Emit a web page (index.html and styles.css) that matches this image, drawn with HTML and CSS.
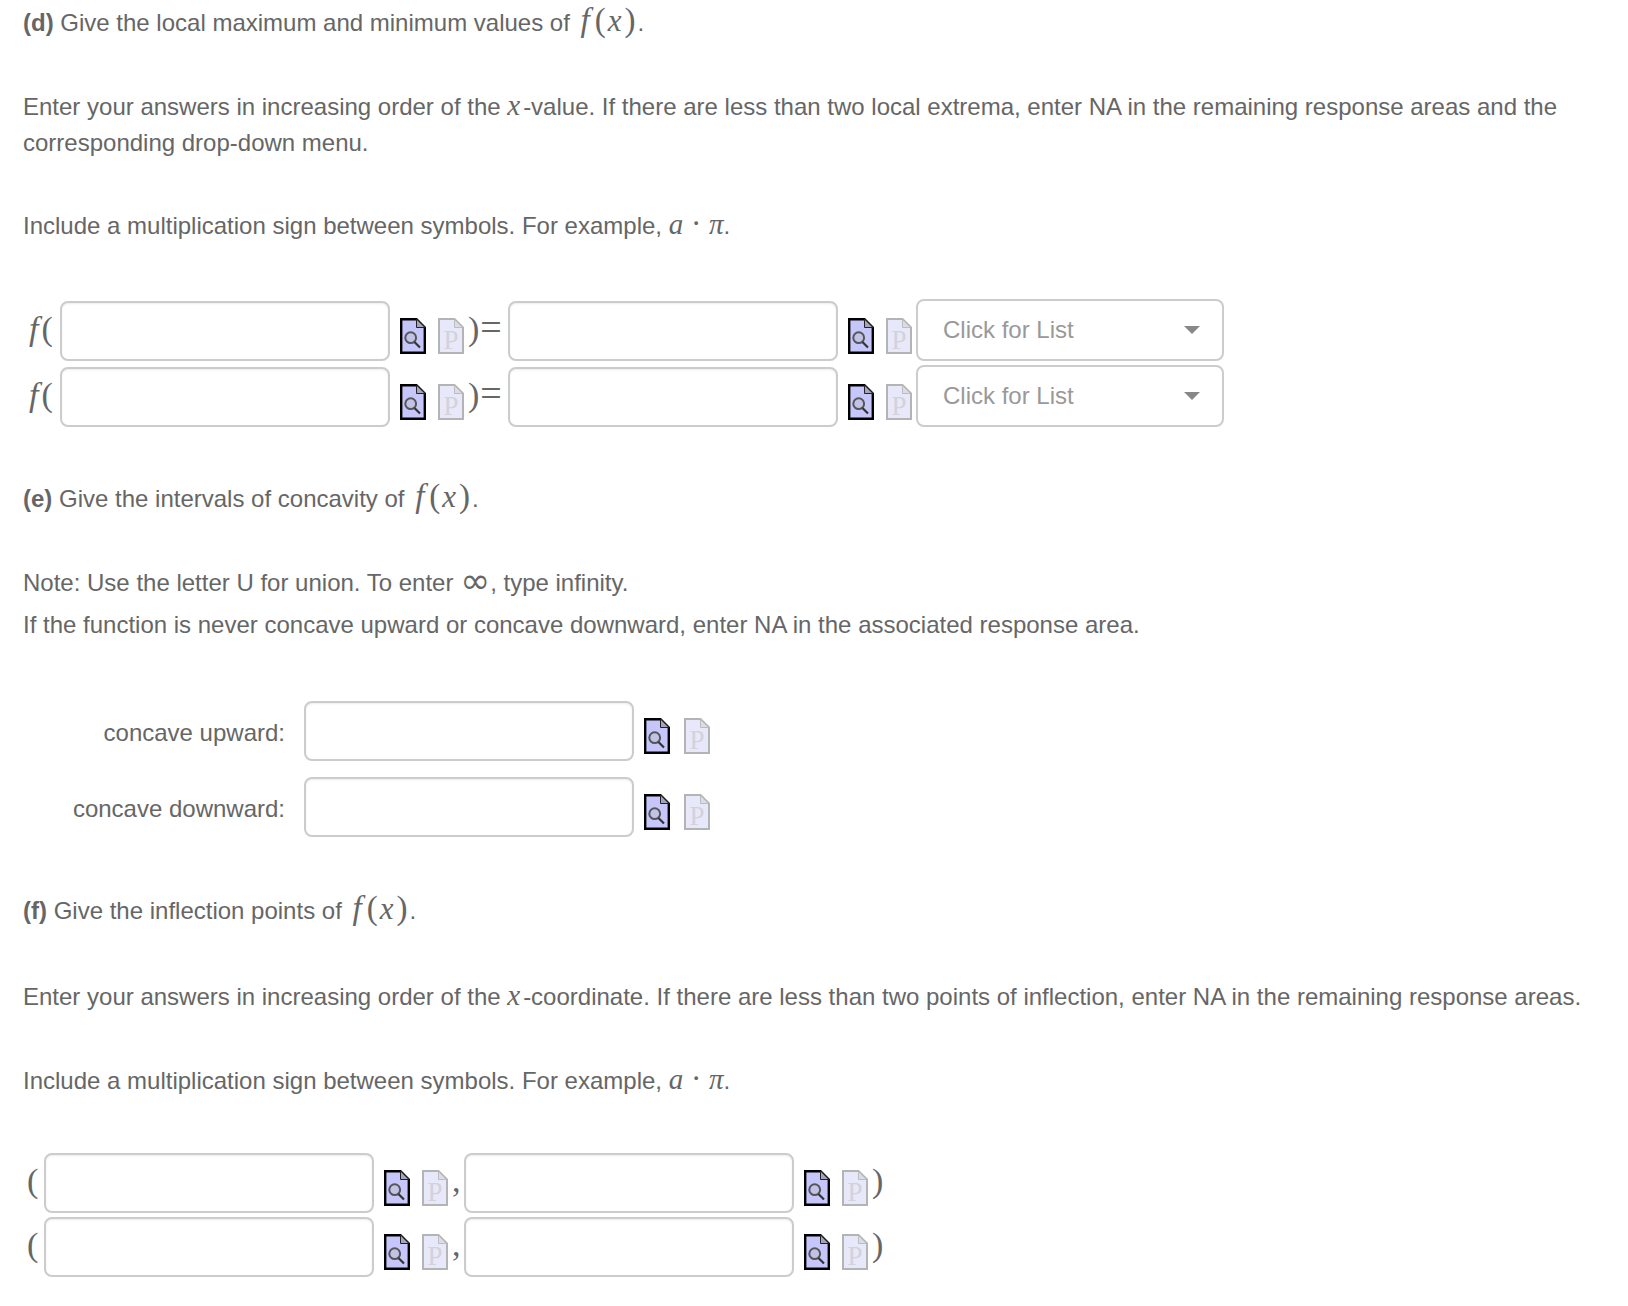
FILE: index.html
```html
<!DOCTYPE html>
<html lang="en">
<head>
  <meta charset="UTF-8">
  <title>Question parts d, e, f</title>
  <link rel="stylesheet" href="styles.css">
</head>
<body>
  <svg class="sprite" xmlns="http://www.w3.org/2000/svg">
    <symbol id="icon-preview" viewBox="0 0 26 36">
      <path d="M1.2 1.2H16.5L24.8 9.5V34.8H1.2Z" fill="#c6c6fb" stroke="#000" stroke-width="2.4"/>
      <path d="M16.5 1V9.5H25Z" fill="#a4a4bc" stroke="#222" stroke-width="1"/>
      <circle cx="10.7" cy="19.7" r="5.4" fill="#c2c2e6" stroke="#555" stroke-width="2"/>
      <path d="M14.5 24L20 29.5" stroke="#333" stroke-width="2.2"/>
    </symbol>
    <symbol id="icon-palette" viewBox="0 0 26 36">
      <path d="M1 1H16.5L25 9.5V35H1Z" fill="#e8e8fb" stroke="#b4b4b4" stroke-width="2"/>
      <path d="M16.5 1.5V9.5H24.5Z" fill="#dcdce4" stroke="#bcbcbc" stroke-width="1"/>
      <text x="13" y="31" class="icon-letter" text-anchor="middle">P</text>
    </symbol>
  </svg>

  <main class="page">
    <p class="line"><b>(d)</b> Give the local maximum and minimum values of <span class="math"><i class="fn">f</i><span class="paren">(</span><i>x</i><span class="paren">)</span></span>.</p>
    <p class="line gap-f">Enter your answers in increasing order of the <span class="math"><i class="var-x">x</i></span>-value. If there are less than two local extrema, enter NA in the remaining response areas and the
      <span class="next-line">corresponding drop-down menu.</span></p>
    <p class="line gap-top">Include a multiplication sign between symbols. For example, <span class="math"><i class="plain">a</i> · <i class="plain">π</i></span>.</p>

    <div class="answer-rows rows-d">
      <div class="row">
        <span class="sym sym-f"><i>f</i>(</span>
        <input class="box" type="text">
        <span class="icons"><svg class="icon"><use href="#icon-preview"/></svg><svg class="icon"><use href="#icon-palette"/></svg></span>
        <span class="sym sym-eq">)<span class="equals">=</span></span>
        <input class="box" type="text">
        <span class="icons"><svg class="icon"><use href="#icon-preview"/></svg><svg class="icon"><use href="#icon-palette"/></svg></span>
        <div class="picker"><span>Click for List</span><span class="caret"></span></div>
      </div>
      <div class="row">
        <span class="sym sym-f"><i>f</i>(</span>
        <input class="box" type="text">
        <span class="icons"><svg class="icon"><use href="#icon-preview"/></svg><svg class="icon"><use href="#icon-palette"/></svg></span>
        <span class="sym sym-eq">)<span class="equals">=</span></span>
        <input class="box" type="text">
        <span class="icons"><svg class="icon"><use href="#icon-preview"/></svg><svg class="icon"><use href="#icon-palette"/></svg></span>
        <div class="picker"><span>Click for List</span><span class="caret"></span></div>
      </div>
    </div>

    <p class="line head-e"><b>(e)</b> Give the intervals of concavity of <span class="math"><i class="fn">f</i><span class="paren">(</span><i>x</i><span class="paren">)</span></span>.</p>
    <p class="line gap-f">Note: Use the letter U for union. To enter <span class="infinity">∞</span>, type infinity.</p>
    <p class="line gap-small">If the function is never concave upward or concave downward, enter NA in the associated response area.</p>

    <div class="concave-rows">
      <div class="row">
        <label class="concave-label">concave upward:</label>
        <input class="box" type="text">
        <span class="icons icons-wide"><svg class="icon"><use href="#icon-preview"/></svg><svg class="icon"><use href="#icon-palette"/></svg></span>
      </div>
      <div class="row">
        <label class="concave-label">concave downward:</label>
        <input class="box" type="text">
        <span class="icons icons-wide"><svg class="icon"><use href="#icon-preview"/></svg><svg class="icon"><use href="#icon-palette"/></svg></span>
      </div>
    </div>

    <p class="line head-f"><b>(f)</b> Give the inflection points of <span class="math"><i class="fn">f</i><span class="paren">(</span><i>x</i><span class="paren">)</span></span>.</p>
    <p class="line gap-lg">Enter your answers in increasing order of the <span class="math"><i class="var-x">x</i></span>-coordinate. If there are less than two points of inflection, enter NA in the remaining response areas.</p>
    <p class="line gap-f">Include a multiplication sign between symbols. For example, <span class="math"><i class="plain">a</i> · <i class="plain">π</i></span>.</p>

    <div class="answer-rows rows-f">
      <div class="row">
        <span class="sym sym-open">(</span>
        <input class="box" type="text">
        <span class="icons"><svg class="icon"><use href="#icon-preview"/></svg><svg class="icon"><use href="#icon-palette"/></svg></span>
        <span class="sym sym-comma">,</span>
        <input class="box" type="text">
        <span class="icons"><svg class="icon"><use href="#icon-preview"/></svg><svg class="icon"><use href="#icon-palette"/></svg></span>
        <span class="sym sym-close">)</span>
      </div>
      <div class="row">
        <span class="sym sym-open">(</span>
        <input class="box" type="text">
        <span class="icons"><svg class="icon"><use href="#icon-preview"/></svg><svg class="icon"><use href="#icon-palette"/></svg></span>
        <span class="sym sym-comma">,</span>
        <input class="box" type="text">
        <span class="icons"><svg class="icon"><use href="#icon-preview"/></svg><svg class="icon"><use href="#icon-palette"/></svg></span>
        <span class="sym sym-close">)</span>
      </div>
    </div>
  </main>
</body>
</html>
```

FILE: styles.css
```css
body {
  margin: 0;
  background-color: #ffffff;
  color: #666666;
  font-family: "Liberation Sans", Arial, sans-serif;
  font-size: 24px;
}

.sprite {
  display: none;
}

.page {
  padding: 5px 0 0 23px;
}

.line {
  margin: 0;
  line-height: 36px;
  max-width: 1590px;
}

.next-line {
  display: block;
}

.gap-top {
  margin-top: 47px;
}

.gap-f {
  margin-top: 48px;
}

.gap-lg {
  margin-top: 50px;
}

.gap-small {
  margin-top: 6px;
}

.head-e {
  margin-top: 54px;
}

.head-f {
  margin-top: 56px;
}

.math {
  font-family: "Liberation Serif", "DejaVu Serif", serif;
  font-size: 31px;
  line-height: 0;
}

.math i {
  letter-spacing: 1px;
}

.math .var-x {
  font-size: 29px;
  letter-spacing: 3px;
}

.math .plain {
  font-size: 29px;
  letter-spacing: 0;
}

.math .fn {
  font-size: 33px;
  letter-spacing: 0;
  margin: 0 3px 0 4px;
}

.paren {
  font-size: 33px;
  margin: 0 2px;
}

.infinity {
  font-family: "DejaVu Sans", sans-serif;
  font-size: 36px;
  line-height: 0;
  vertical-align: -2px;
}

.answer-rows {
  display: flex;
  flex-direction: column;
}

.rows-d {
  gap: 4px;
  margin-top: 55px;
}

.rows-f {
  gap: 4px;
  margin-top: 54px;
}

.concave-rows {
  display: flex;
  flex-direction: column;
  gap: 16px;
  margin-top: 58px;
}

.row {
  display: flex;
  align-items: flex-end;
}

.box {
  width: 330px;
  height: 60px;
  padding: 0 12px;
  box-sizing: border-box;
  border: 2px solid #cccccc;
  border-radius: 8px;
  box-shadow: inset 0 1px 2px rgba(0, 0, 0, 0.08);
  background-color: #ffffff;
}

.icons {
  display: flex;
  gap: 12px;
  margin: 0 4px 7px 10px;
}

.icons-wide {
  gap: 14px;
}

.icon {
  display: block;
  width: 26px;
  height: 36px;
}

.icon-letter {
  font-family: "Liberation Serif", serif;
  font-size: 27px;
  fill: #d2d2da;
}

.sym {
  font-family: "Liberation Serif", serif;
  font-size: 34px;
  line-height: 54px;
  color: #666666;
  margin-bottom: 5px;
}

.sym-f {
  width: 37px;
  padding-left: 6px;
  box-sizing: border-box;
  letter-spacing: 3px;
}

.sym-eq {
  width: 40px;
  white-space: nowrap;
}

.equals {
  font-size: 38px;
  line-height: 0;
  margin-left: 1px;
}

.sym-open {
  width: 21px;
  padding-left: 4px;
  box-sizing: border-box;
}

.sym-comma {
  width: 12px;
}

.picker {
  display: flex;
  align-items: center;
  justify-content: space-between;
  width: 308px;
  height: 62px;
  padding: 0 22px 0 25px;
  box-sizing: border-box;
  border: 2px solid #cccccc;
  border-radius: 8px;
  color: #999999;
}

.caret {
  width: 0;
  height: 0;
  border-left: 8px solid transparent;
  border-right: 8px solid transparent;
  border-top: 8px solid #888888;
}

.concave-label {
  width: 262px;
  margin: 0 19px -2px 0;
  text-align: right;
  line-height: 60px;
}
```
